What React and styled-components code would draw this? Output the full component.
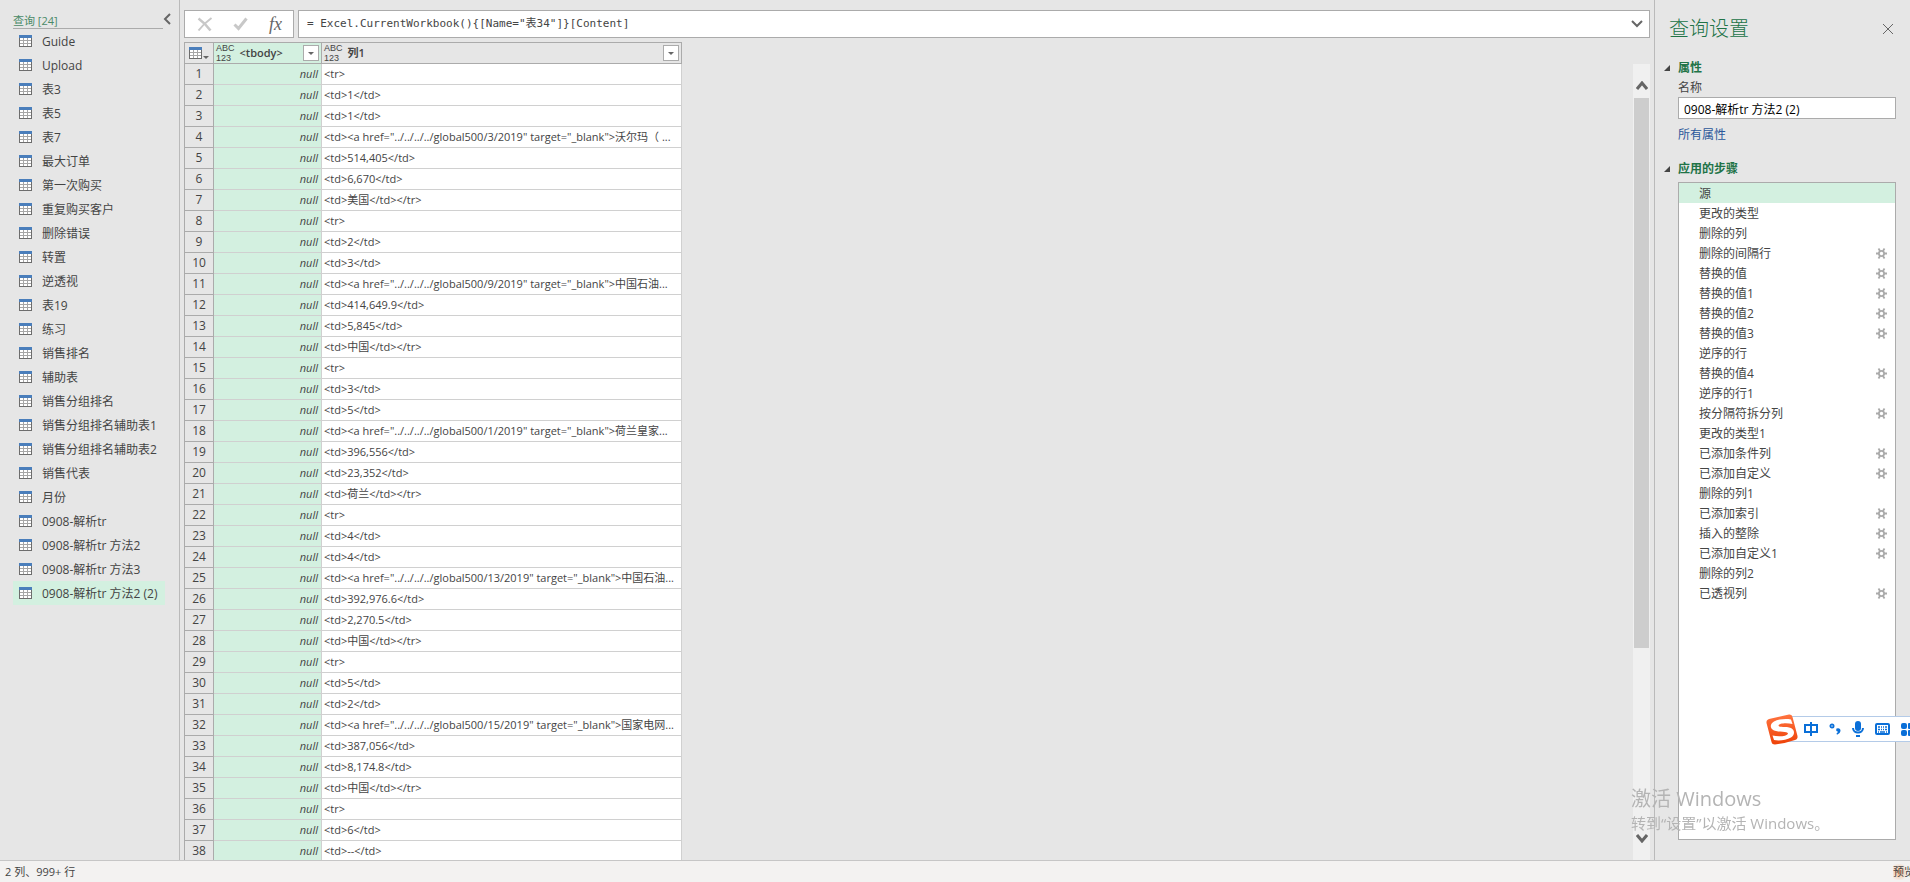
import React, { useState } from 'react';
import styled, { createGlobalStyle } from 'styled-components';

const uiFont = '"Open Sans", "Noto Sans CJK SC", sans-serif';

const GlobalStyle = createGlobalStyle`
  *, *::before, *::after {
    box-sizing: border-box;
  }
  html, body, #root {
    height: 100%;
    margin: 0;
  }
  body {
    background: #e6e6e6;
    color: #444;
    font: 12px/16px ${uiFont};
    overflow: hidden;
  }
  button, input {
    font: inherit;
    color: inherit;
  }
  button {
    border: 0;
    padding: 0;
    background: none;
    cursor: pointer;
  }
`;

const queries = [
  'Guide', 'Upload', '表3', '表5', '表7', '最大订单', '第一次购买', '重复购买客户',
  '删除错误', '转置', '逆透视', '表19', '练习', '销售排名', '辅助表', '销售分组排名',
  '销售分组排名辅助表1', '销售分组排名辅助表2', '销售代表', '月份', '0908-解析tr',
  '0908-解析tr 方法2', '0908-解析tr 方法3', '0908-解析tr 方法2 (2)',
];

const link = (id, name) => `<td><a href="../../../../global500/${id}/2019" target="_blank">${name}...`;

const rows = [
  '<tr>', '<td>1</td>', '<td>1</td>', link(3, '沃尔玛（ '), '<td>514,405</td>', '<td>6,670</td>', '<td>美国</td></tr>',
  '<tr>', '<td>2</td>', '<td>3</td>', link(9, '中国石油'), '<td>414,649.9</td>', '<td>5,845</td>', '<td>中国</td></tr>',
  '<tr>', '<td>3</td>', '<td>5</td>', link(1, '荷兰皇家'), '<td>396,556</td>', '<td>23,352</td>', '<td>荷兰</td></tr>',
  '<tr>', '<td>4</td>', '<td>4</td>', link(13, '中国石油'), '<td>392,976.6</td>', '<td>2,270.5</td>', '<td>中国</td></tr>',
  '<tr>', '<td>5</td>', '<td>2</td>', link(15, '国家电网'), '<td>387,056</td>', '<td>8,174.8</td>', '<td>中国</td></tr>',
  '<tr>', '<td>6</td>', '<td>--</td>',
];

// [step name, has settings]
const steps = [
  ['源', false], ['更改的类型', false], ['删除的列', false], ['删除的间隔行', true],
  ['替换的值', true], ['替换的值1', true], ['替换的值2', true], ['替换的值3', true],
  ['逆序的行', false], ['替换的值4', true], ['逆序的行1', false], ['按分隔符拆分列', true],
  ['更改的类型1', false], ['已添加条件列', true], ['已添加自定义', true], ['删除的列1', false],
  ['已添加索引', true], ['插入的整除', true], ['已添加自定义1', true], ['删除的列2', false],
  ['已透视列', true],
];

/* ---------- icons ---------- */

const TableIcon = () => (
  <svg width="13" height="12" viewBox="0 0 13 12" shapeRendering="crispEdges" aria-hidden="true">
    <rect width="13" height="12" fill="#6d6d6d" />
    <rect x="1" y="3" width="11" height="8" fill="#fff" />
    <path d="M1 5.5h11M1 8.5h11M4.5 3v8M8.5 3v8" stroke="#a6a6a6" />
    <rect width="13" height="3" fill="#4a7ebb" />
  </svg>
);

const Chevron = ({ d, width, height, stroke = 2, color = '#666' }) => (
  <svg width={width} height={height} viewBox={`0 0 ${width} ${height}`} fill="none" stroke={color} strokeWidth={stroke} aria-hidden="true">
    <path d={d} />
  </svg>
);

const CancelIcon = () => (
  <svg width="16" height="15" viewBox="0 0 16 15" fill="none" stroke="#c8c8c8" aria-hidden="true">
    <path d="M1.5 1.5C5 4 10 9 13.5 13.5" strokeWidth="2.6" />
    <path d="M14.5 1C9 5 5 9 1.5 13.5" strokeWidth="2" />
  </svg>
);

const CheckIcon = () => (
  <svg width="16" height="14" viewBox="0 0 16 14" fill="none" stroke="#c8c8c8" aria-hidden="true">
    <path d="M1.5 7.5L5.5 11.5L13.5 1.5" strokeWidth="3" />
  </svg>
);

const GearIcon = () => (
  <svg width="11" height="11" viewBox="0 0 11 11" fill="none" stroke="#aaa" aria-hidden="true">
    <circle cx="5.5" cy="5.5" r="2.6" strokeWidth="1.8" />
    <path d="M0 5.5h3M8 5.5h3M2.5 .5l1.5 2.5M8.5 .5L7 3M2.5 10.5L4 8M8.5 10.5L7 8" strokeWidth="1.8" />
  </svg>
);

const SogouLogo = () => (
  <svg width="32" height="31" viewBox="0 0 32 31" aria-hidden="true">
    <defs>
      <linearGradient id="sogou" x1="0" y1="0" x2="0" y2="1">
        <stop offset="0" stopColor="#ff7440" />
        <stop offset="1" stopColor="#ee4208" />
      </linearGradient>
    </defs>
    <path d="M3 5L23 .5Q26 0 26.5 3L31.5 22Q32 25 29 26Q19 29.5 9 30.5Q6 30.5 5.5 28L.5 9Q0 6 3 5Z" fill="url(#sogou)" />
    <path
      d="M25 5.5L26.5 10C21 8.5 13 9 12.5 11.5C13 14 20 12 25 14C29 16 29 21 25 23.5C20 26.5 12 27 8 26L6.5 21.5C12 23 21 22.5 22 19.5C21.5 17 13 18.5 8 16.5C3.5 14.5 4 9.5 8 7.5C13 5 20 4.5 25 5.5Z"
      fill="#fff"
    />
  </svg>
);

const MicIcon = () => (
  <svg width="12" height="16" viewBox="0 0 12 16" fill="none" stroke="#0a6fd8" strokeWidth="2" aria-hidden="true">
    <rect x="3" y="0" width="6" height="10" rx="3" fill="#0a6fd8" stroke="none" />
    <path d="M1 7C1 13 11 13 11 7M4 15h4" />
  </svg>
);

const KeyboardIcon = () => (
  <svg width="15" height="12" viewBox="0 0 15 12" aria-hidden="true">
    <rect x="1" y="1" width="13" height="10" rx="1" fill="none" stroke="#0a6fd8" strokeWidth="2" />
    <path d="M3 4h2M6 4h1M8 4h1M10 4h2M3 6.5h2M6 6.5h1M8 6.5h1M10 6.5h2M3 9h1M5 9h5M11 9h1" stroke="#0a6fd8" strokeWidth="1.5" />
  </svg>
);

const GridIcon = () => (
  <svg width="13" height="13" viewBox="0 0 13 13" fill="#0a6fd8" aria-hidden="true">
    <rect width="6" height="6" rx="2" />
    <rect x="7" width="6" height="6" rx="1" />
    <rect y="7" width="6" height="6" rx="2" />
    <rect x="7" y="7" width="6" height="6" rx="1" />
  </svg>
);

const ChineseModeIcon = () => (
  <svg width="14" height="14" viewBox="0 0 14 14" fill="none" stroke="#0a6fd8" strokeWidth="2" aria-hidden="true">
    <rect x="1" y="3" width="12" height="7" />
    <path d="M7 0v14" />
  </svg>
);

const PunctuationIcon = () => (
  <svg width="12" height="12" viewBox="0 0 12 12" aria-hidden="true">
    <circle cx="3" cy="3" r="1.6" fill="none" stroke="#0a6fd8" strokeWidth="1.8" />
    <path d="M7.5 5.5q4-1 4 2.5q0 2-3.5 3.8l-.5-1.3q1.500-1 1.300-2q-2.300 0-1.300-3z" fill="#0a6fd8" />
  </svg>
);

/* ---------- layout ---------- */

const Window = styled.div`
  display: flex;
  flex-direction: column;
  height: 100vh;
`;

const Workspace = styled.div`
  display: flex;
  flex: 1;
  min-height: 0;
`;

const Sidebar = styled.nav`
  flex: 0 0 180px;
  padding: 8px 14px 0 13px;
  border-right: 1px solid #bababa;
`;

const SidebarHeader = styled.div`
  display: flex;
  align-items: flex-start;
  justify-content: space-between;
  height: 21px;
  margin-right: -6px;
`;

const SidebarTitle = styled.h2`
  flex: 1;
  height: 21px;
  margin: 0;
  padding-top: 5px;
  border-bottom: 1px solid #ababab;
  color: #4a8a68;
  font-size: 11px;
  font-weight: 400;
`;

const CollapseButton = styled.button`
  display: flex;
  padding-top: 5px;
`;

const QueryList = styled.ul`
  margin: 0;
  padding: 0;
  list-style: none;
`;

const QueryButton = styled.button`
  display: flex;
  align-items: center;
  gap: 10px;
  width: 100%;
  height: 24px;
  padding-left: 6px;
  background: ${(p) => (p.$active ? '#d3f0e0' : 'transparent')};
  white-space: nowrap;
`;

const QueryName = styled.span`
  padding-top: 2px;
`;

const Main = styled.main`
  display: flex;
  flex: 1;
  flex-direction: column;
  min-width: 0;
  padding: 10px 4px 0;
  border-right: 1px solid #bababa;
`;

const FormulaBar = styled.div`
  display: flex;
  gap: 4px;
  margin-bottom: 4px;
`;

const FormulaActions = styled.div`
  display: flex;
  align-items: center;
  justify-content: space-between;
  width: 110px;
  height: 28px;
  padding: 0 11px 0 12px;
  border: 1px solid #ababab;
  background: #fff;
`;

const IconButton = styled.button`
  display: flex;
  align-items: center;
  justify-content: center;
`;

const FxButton = styled(IconButton)`
  color: #666;
  font: italic 18px/20px "Liberation Serif", serif;
`;

const FormulaField = styled.div`
  display: flex;
  flex: 1;
  align-items: center;
  padding: 0 6px 0 8px;
  border: 1px solid #ababab;
  background: #fff;
`;

const FormulaInput = styled.input`
  flex: 1;
  min-width: 0;
  padding: 0;
  border: 0;
  outline: 0;
  font: 11px/16px "DejaVu Sans Mono", "Noto Sans CJK SC", monospace;
`;

const GridArea = styled.div`
  display: flex;
  flex: 1;
  justify-content: space-between;
  min-height: 0;
`;

const GridViewport = styled.div`
  overflow: hidden;
`;

const Grid = styled.table`
  width: 498px;
  table-layout: fixed;
  border-collapse: collapse;
  font-size: 11px;
`;

const HeadCell = styled.th`
  height: 21px;
  padding: 0 2px;
  border: 1px solid #ababab;
  background: ${(p) => (p.$active ? '#d3f0e0' : '#e6e6e6')};
  font-weight: 600;
  text-align: left;
`;

const HeadContent = styled.div`
  display: flex;
  align-items: center;
  gap: 5px;
`;

const TypeTag = styled.span`
  display: flex;
  flex-direction: column;
  font: 9px/10px "Liberation Sans", sans-serif;
`;

const FilterButton = styled.button`
  display: flex;
  align-items: center;
  justify-content: center;
  width: 16px;
  height: 16px;
  margin-left: auto;
  border: 1px solid #ababab;
  background: #fff;
`;

const Triangle = styled.span`
  border: 3px solid transparent;
  border-top-color: #666;
  border-bottom: 0;
`;

const TableMenuButton = styled(IconButton)`
  align-items: flex-end;
  gap: 1px;
  padding-left: 2px;
`;

const RowNumber = styled.th`
  height: 21px;
  padding: 0;
  border: 1px solid #ababab;
  background: #e6e6e6;
  font-size: 12px;
  font-weight: 400;
`;

const Cell = styled.td`
  height: 21px;
  padding: 0 3px 0 2px;
  overflow: hidden;
  border: 1px solid #d0d0d0;
  background: ${(p) => (p.$active ? '#d3f0e0' : '#fff')};
  font-style: ${(p) => (p.$active ? 'italic' : 'normal')};
  text-align: ${(p) => (p.$active ? 'right' : 'left')};
  text-overflow: ellipsis;
  white-space: nowrap;
`;

const ScrollTrack = styled.div`
  display: flex;
  flex: 0 0 17px;
  flex-direction: column;
  align-items: center;
  margin-top: 22px;
  background: #f0f0f0;
`;

const ScrollButton = styled(IconButton)`
  flex: 0 0 34px;
  padding-top: 9px;
`;

const ScrollDownButton = styled(IconButton)`
  flex: 0 0 44px;
`;

const ScrollThumb = styled.div`
  flex: 0 1 550px;
  width: 15px;
  margin-bottom: auto;
  background: #cdcdcd;
`;

const Settings = styled.aside`
  display: flex;
  flex: 0 0 255px;
  flex-direction: column;
  padding: 14px 14px 20px 9px;
`;

const SettingsHeader = styled.div`
  display: flex;
  align-items: center;
  justify-content: space-between;
  margin-bottom: 17px;
  padding: 1px 2px 0 5px;
`;

const SettingsTitle = styled.h1`
  margin: 0;
  color: #217346;
  font-size: 20px;
  font-weight: 300;
  line-height: 28px;
`;

const SectionTitle = styled.h2`
  display: flex;
  align-items: center;
  gap: 8px;
  margin: 0;
  color: #217346;
  font-size: 12px;
  line-height: 16px;

  &::before {
    content: '';
    border: 3px solid #444;
    border-top-color: transparent;
    border-left-color: transparent;
  }
`;

const SectionBody = styled.div`
  display: flex;
  flex-direction: column;
  align-items: stretch;
  margin-bottom: 18px;
  padding: 4px 0 0 14px;
`;

const NameInput = styled.input`
  height: 22px;
  margin: 1px 0 8px;
  padding: 1px 5px 0;
  border: 1px solid #ababab;
  background: #fff;
  color: #000;
`;

const AllProperties = styled.a`
  color: #2b579a;
  text-decoration: none;
`;

const StepList = styled.ol`
  flex: 1;
  margin: 5px 0 0 14px;
  padding: 0;
  border: 1px solid #ababab;
  background: #fff;
  list-style: none;
`;

const Step = styled.li`
  display: flex;
  align-items: center;
  height: 20px;
  padding-right: 8px;
  background: ${(p) => (p.$active ? '#d3f0e0' : 'transparent')};
`;

const StepName = styled.button`
  flex: 1;
  padding: 2px 0 0 20px;
  text-align: left;
`;

const StatusBar = styled.footer`
  display: flex;
  flex: 0 0 22px;
  align-items: center;
  justify-content: space-between;
  padding-left: 5px;
  border-top: 1px solid #c6c6c6;
  background: #f3f2f1;
  font-size: 11px;
`;

const PreviewNote = styled.span`
  width: 17px;
  overflow: hidden;
  background: radial-gradient(circle at 6px 8px, #f6b98c 0, #f3f2f1 9px);
  white-space: nowrap;
`;

const ImeBar = styled.div`
  position: fixed;
  right: 0;
  bottom: 138px;
  display: flex;
  align-items: center;
  width: 144px;
  height: 30px;
`;

const ImeButtons = styled.div`
  display: flex;
  flex: 1;
  align-items: center;
  gap: 11px;
  height: 26px;
  margin-left: -16px;
  padding-left: 22px;
  overflow: hidden;
  border: solid #b4cbe8;
  border-width: 1px 0;
  background: #fff;
`;

const ImeLogo = styled(IconButton)`
  z-index: 1;
`;

const ImeKey = styled(IconButton)`
  flex: none;
`;

const Watermark = styled.div`
  position: fixed;
  right: 80px;
  bottom: 48px;
  width: 199px;
  color: #b4b4b4;
  font-size: 15px;
  line-height: 22px;
  white-space: nowrap;
  pointer-events: none;
`;

const WatermarkTitle = styled.div`
  font-size: 20px;
  line-height: 26px;
`;

const ColumnHead = ({ name, active }) => (
  <HeadCell $active={active} scope="col">
    <HeadContent>
      <TypeTag>
        <span>ABC</span>
        <span>123</span>
      </TypeTag>
      {name}
      <FilterButton aria-label={`筛选 ${name}`}>
        <Triangle />
      </FilterButton>
    </HeadContent>
  </HeadCell>
);

const App = () => {
  const [query, setQuery] = useState(queries.length - 1);
  const [step, setStep] = useState(0);

  return (
    <Window>
      <GlobalStyle />
      <Workspace>
        <Sidebar>
          <SidebarHeader>
            <SidebarTitle>查询 [24]</SidebarTitle>
            <CollapseButton aria-label="折叠">
              <Chevron width={8} height={12} d="M7 1L2 6L7 11" />
            </CollapseButton>
          </SidebarHeader>
          <QueryList>
            {queries.map((name, i) => (
              <li key={name}>
                <QueryButton $active={i === query} onClick={() => setQuery(i)}>
                  <TableIcon />
                  <QueryName>{name}</QueryName>
                </QueryButton>
              </li>
            ))}
          </QueryList>
        </Sidebar>

        <Main>
          <FormulaBar>
            <FormulaActions>
              <IconButton aria-label="取消"><CancelIcon /></IconButton>
              <IconButton aria-label="确认"><CheckIcon /></IconButton>
              <FxButton aria-label="插入函数">fx</FxButton>
            </FormulaActions>
            <FormulaField>
              <FormulaInput aria-label="公式" defaultValue={'= Excel.CurrentWorkbook(){[Name="表34"]}[Content]'} />
              <IconButton aria-label="展开">
                <Chevron width={12} height={8} d="M1 1L6 6L11 1" />
              </IconButton>
            </FormulaField>
          </FormulaBar>

          <GridArea>
            <GridViewport>
              <Grid>
                <colgroup>
                  <col width="29" />
                  <col width="108" />
                  <col />
                </colgroup>
                <thead>
                  <tr>
                    <HeadCell>
                      <TableMenuButton aria-label="表格菜单">
                        <TableIcon />
                        <Triangle />
                      </TableMenuButton>
                    </HeadCell>
                    <ColumnHead name="<tbody>" active />
                    <ColumnHead name="列1" />
                  </tr>
                </thead>
                <tbody>
                  {rows.map((value, i) => (
                    <tr key={i}>
                      <RowNumber scope="row">{i + 1}</RowNumber>
                      <Cell $active>null</Cell>
                      <Cell>{value}</Cell>
                    </tr>
                  ))}
                </tbody>
              </Grid>
            </GridViewport>
            <ScrollTrack>
              <ScrollButton aria-label="向上滚动">
                <Chevron width={12} height={9} d="M1 8L6 2L11 8" stroke={3} />
              </ScrollButton>
              <ScrollThumb />
              <ScrollDownButton aria-label="向下滚动">
                <Chevron width={12} height={9} d="M1 1L6 7L11 1" stroke={3} />
              </ScrollDownButton>
            </ScrollTrack>
          </GridArea>
        </Main>

        <Settings>
          <SettingsHeader>
            <SettingsTitle>查询设置</SettingsTitle>
            <IconButton aria-label="关闭">
              <Chevron width={12} height={12} d="M1 1L11 11M11 1L1 11" stroke={1} />
            </IconButton>
          </SettingsHeader>
          <SectionTitle>属性</SectionTitle>
          <SectionBody>
            <label htmlFor="query-name">名称</label>
            <NameInput id="query-name" defaultValue="0908-解析tr 方法2 (2)" />
            <AllProperties href="#properties">所有属性</AllProperties>
          </SectionBody>
          <SectionTitle>应用的步骤</SectionTitle>
          <StepList>
            {steps.map(([name, hasSettings], i) => (
              <Step key={name} $active={i === step}>
                <StepName onClick={() => setStep(i)}>{name}</StepName>
                {hasSettings && (
                  <IconButton aria-label={`${name} 设置`}>
                    <GearIcon />
                  </IconButton>
                )}
              </Step>
            ))}
          </StepList>
        </Settings>
      </Workspace>

      <StatusBar>
        <span>2 列、999+ 行</span>
        <PreviewNote>预览</PreviewNote>
      </StatusBar>

      <ImeBar>
        <ImeLogo aria-label="搜狗输入法"><SogouLogo /></ImeLogo>
        <ImeButtons>
          <ImeKey aria-label="中文"><ChineseModeIcon /></ImeKey>
          <ImeKey aria-label="标点"><PunctuationIcon /></ImeKey>
          <ImeKey aria-label="语音"><MicIcon /></ImeKey>
          <ImeKey aria-label="键盘"><KeyboardIcon /></ImeKey>
          <ImeKey aria-label="工具箱"><GridIcon /></ImeKey>
        </ImeButtons>
      </ImeBar>

      <Watermark>
        <WatermarkTitle>激活 Windows</WatermarkTitle>
        转到“设置”以激活 Windows。
      </Watermark>
    </Window>
  );
};

export default App;
